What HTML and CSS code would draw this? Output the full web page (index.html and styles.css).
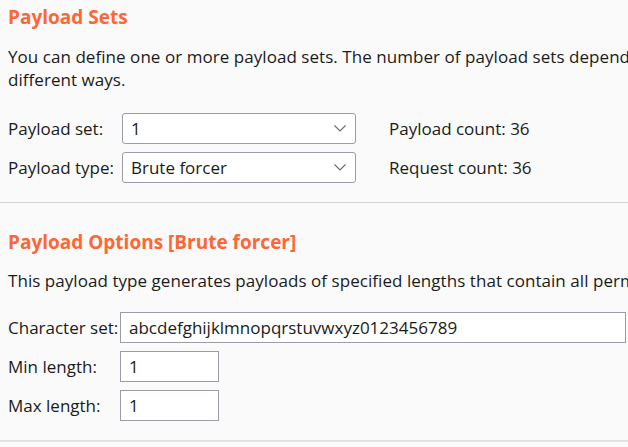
FILE: index.html
```html
<!DOCTYPE html>
<html>
<head>
<meta charset="utf-8">
<link rel="stylesheet" href="styles.css">
</head>
<body>
<div class="page">
  <section class="panel panel-sets">
    <h2 class="title">Payload Sets</h2>
    <p class="desc">You can define one or more payload sets. The number of payload sets depends on the attack type defined in the Positions tab. Various payload types are available for each payload set, and each payload type can be customized in<br>different ways.</p>
    <div class="form form-sets">
      <span class="label">Payload set:</span>
      <div class="select"><span>1</span><svg class="chev" width="12" height="7" viewBox="0 0 12 7"><polyline points="0.5,0.5 6,6 11.5,0.5" fill="none" stroke="#6b6b6b" stroke-width="1.1"/></svg></div>
      <span class="count">Payload count: 36</span>
      <span class="label">Payload type:</span>
      <div class="select"><span>Brute forcer</span><svg class="chev" width="12" height="7" viewBox="0 0 12 7"><polyline points="0.5,0.5 6,6 11.5,0.5" fill="none" stroke="#6b6b6b" stroke-width="1.1"/></svg></div>
      <span class="count">Request count: 36</span>
    </div>
  </section>
  <section class="panel panel-options">
    <h2 class="title">Payload Options [Brute forcer]</h2>
    <p class="desc">This payload type generates payloads of specified lengths that contain all permutations of a specified character set.</p>
    <div class="form form-options">
      <span class="label">Character set:</span>
      <div class="input input-wide">abcdefghijklmnopqrstuvwxyz0123456789</div>
      <span class="label">Min length:</span>
      <div class="input input-short">1</div>
      <span class="label">Max length:</span>
      <div class="input input-short">1</div>
    </div>
  </section>
</div>
</body>
</html>
```

FILE: styles.css
```css
html, body {
  margin: 0;
  padding: 0;
  background: #fafafa;
  overflow: hidden;
}
body {
  width: 628px;
  height: 447px;
  font-family: "Open Sans", "Noto Sans", sans-serif;
  font-size: 17px;
  color: #1a1a1a;
}
.page {
  display: flex;
  flex-direction: column;
}
.panel {
  padding-left: 8px;
  display: flex;
  flex-direction: column;
}
.panel-sets {
  padding-top: 4px;
  padding-bottom: 19px;
  border-bottom: 1px solid #d2d2d2;
}
.panel-options {
  padding-top: 26px;
  padding-bottom: 19px;
  border-bottom: 2px solid #e2e2e2;
}
.title {
  margin: 0;
  font-size: 19px;
  line-height: 26px;
  font-weight: 700;
  color: #ff6633;
}
.desc {
  margin: 15px 0 0 0;
  line-height: 23px;
  white-space: nowrap;
  letter-spacing: 0.05px;
}
.panel-options .desc {
  margin-top: 14px;
}
.form {
  display: grid;
  row-gap: 8px;
  align-items: center;
  margin-top: 22px;
}
.form-sets {
  grid-template-columns: 114px 234px auto;
}
.form-options {
  margin-top: 20px;
  grid-template-columns: 112px auto;
}
.label {
  line-height: 23px;
  white-space: nowrap;
}
.select {
  box-sizing: border-box;
  height: 31px;
  border: 1px solid #9c9ca6;
  border-radius: 3px;
  background: #ffffff;
  display: flex;
  align-items: center;
  justify-content: space-between;
  padding: 0 9px 0 8px;
}
.chev {
  display: block;
}
.count {
  margin-left: 33px;
  white-space: nowrap;
}
.input {
  box-sizing: border-box;
  height: 31px;
  border: 1px solid #9c9ca6;
  background: #ffffff;
  display: flex;
  align-items: center;
  padding: 0 8px;
  white-space: nowrap;
}
.input-wide {
  width: 506px;
}
.input-short {
  width: 99px;
}
```
